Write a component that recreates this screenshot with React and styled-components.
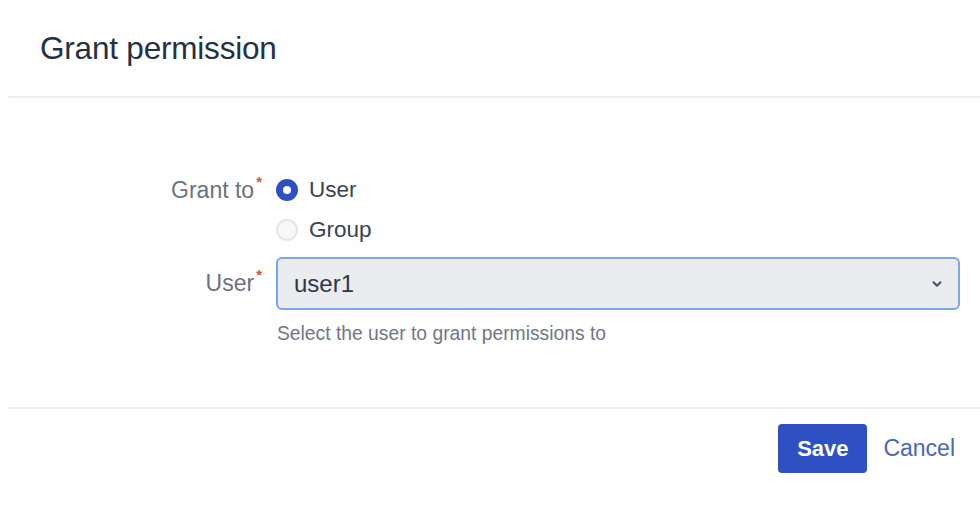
import React, { useState } from 'react';
import styled, { createGlobalStyle } from 'styled-components';

const GlobalStyle = createGlobalStyle`
  html, body {
    margin: 0;
    padding: 0;
    background: #ffffff;
  }
  body {
    font-family: "Liberation Sans", Arial, sans-serif;
    color: #172b4d;
  }
`;

function App() {
  const [grantTo, setGrantTo] = useState('user');

  return (
    <>
      <GlobalStyle />
      <Dialog>
        <Header>
          <Title>Grant permission</Title>
        </Header>

        <Body>
          <Label>
            Grant to<Required>*</Required>
          </Label>
          <RadioGroup>
            <RadioRow onClick={() => setGrantTo('user')}>
              <RadioDot checked={grantTo === 'user'} />
              User
            </RadioRow>
            <RadioRow onClick={() => setGrantTo('group')}>
              <RadioDot checked={grantTo === 'group'} />
              Group
            </RadioRow>
          </RadioGroup>

          <Label $select>
            User<Required>*</Required>
          </Label>
          <Field>
            <Select>
              <span>user1</span>
              <svg width="14" height="14" viewBox="0 0 24 24">
                <path d="M6 9l6 6 6-6" fill="none" stroke="#42526e" strokeWidth="3.5" strokeLinecap="round" strokeLinejoin="round" />
              </svg>
            </Select>
            <Help>Select the user to grant permissions to</Help>
          </Field>
        </Body>

        <Footer>
          <SaveButton>Save</SaveButton>
          <LinkButton>Cancel</LinkButton>
        </Footer>
      </Dialog>
    </>
  );
}

export default App;

// ----- dialog frame
const Dialog = styled.div`
  margin-left: 8px;
  display: flex;
  flex-direction: column;
`;

const Header = styled.div`
  height: 98px;
  box-sizing: border-box;
  padding: 30px 0 0 32px;
  border-bottom: 2px solid #eeeff1;
`;

const Title = styled.h1`
  margin: 0;
  font-size: 31.5px;
  font-weight: 400;
  color: #253044;
  letter-spacing: -0.2px;
`;

// ----- form
const Body = styled.div`
  display: grid;
  grid-template-columns: 254px 1fr;
  column-gap: 14px;
  row-gap: 12px;
  padding: 77px 20px 62px 0;
  border-bottom: 2px solid #eeeff1;
`;

const Label = styled.div`
  text-align: right;
  font-size: 23px;
  line-height: ${(p) => (p.$select ? '53px' : '30px')};
  color: #6b7280;
  align-self: start;
`;

// small red marker sitting at cap height next to the label
const Required = styled.span`
  display: inline-block;
  color: #d9562f;
  font-size: 15px;
  font-weight: 700;
  line-height: 1;
  margin-left: 2px;
  vertical-align: baseline;
  position: relative;
  top: -0.75em;
`;

const RadioGroup = styled.div`
  display: flex;
  flex-direction: column;
  gap: 10px;
`;

const RadioRow = styled.label`
  display: flex;
  align-items: center;
  gap: 11px;
  height: 30px;
  font-size: 22.5px;
  color: #3b4252;
  cursor: pointer;
`;

const RadioDot = styled.span`
  width: 22px;
  height: 22px;
  border-radius: 50%;
  box-sizing: border-box;
  background: ${(p) => (p.checked ? '#2f50c2' : '#f7f8f9')};
  border: ${(p) => (p.checked ? 'none' : '2px solid #e4e6ea')};
  position: relative;
  &::after {
    content: '';
    display: ${(p) => (p.checked ? 'block' : 'none')};
    position: absolute;
    left: 7px;
    top: 7px;
    width: 8px;
    height: 8px;
    border-radius: 50%;
    background: #ffffff;
  }
`;

const Field = styled.div`
  display: flex;
  flex-direction: column;
`;

const Select = styled.div`
  height: 53px;
  box-sizing: border-box;
  border: 2px solid #7aa6ea;
  border-radius: 6px;
  background: #ebecf0;
  display: flex;
  align-items: center;
  justify-content: space-between;
  padding: 0 14px 0 16px;
  font-size: 24px;
  color: #2f3646;
`;

const Help = styled.div`
  margin-top: 13px;
  padding-left: 1px;
  font-size: 19.3px;
  color: #717784;
`;

// ----- footer
const Footer = styled.div`
  display: flex;
  justify-content: flex-end;
  align-items: center;
  gap: 16px;
  padding: 15px 25px 0 0;
`;

const SaveButton = styled.button`
  width: 89px;
  height: 49px;
  border: none;
  border-radius: 4px;
  background: #2f50c2;
  color: #ffffff;
  font-family: inherit;
  font-size: 22px;
  font-weight: 700;
  cursor: pointer;
`;

const LinkButton = styled.button`
  border: none;
  background: none;
  padding: 0;
  font-family: inherit;
  font-size: 23px;
  color: #4a67b8;
  cursor: pointer;
`;
